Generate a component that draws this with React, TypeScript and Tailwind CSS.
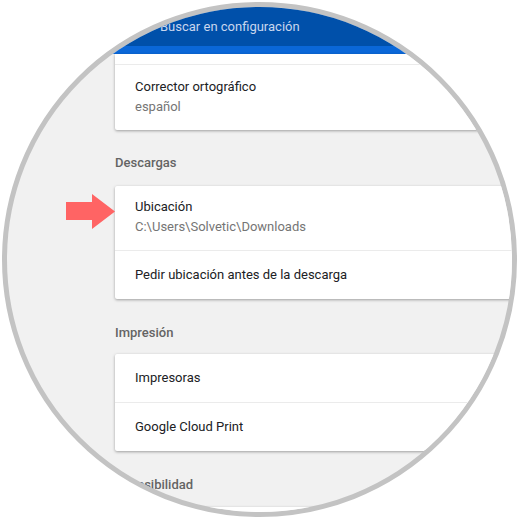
export default function App() {
  return (
    <div className="w-[520px] h-[520px] bg-white relative overflow-hidden font-['Roboto',sans-serif] text-[13px]">
      <div className="ml-[2px] mt-[2px] w-[515px] h-[515px] rounded-full border-[5px] border-[#c3c3c3] overflow-hidden bg-[#f1f1f1]">
        <div className="-ml-[7px] -mt-[7px] w-[540px]">
          {/* toolbar */}
          <div className="h-[46px] bg-[#0050aa] pl-[160px] pt-[19px]">
            <span className="block leading-[16px] text-[#c8d6ee]">Buscar en configuración</span>
          </div>
          <div className="h-[8px] bg-[#0a67d8]" />

          <div className="pl-[115px]">
            {/* spell check card (scrolled) */}
            <div className="bg-white rounded-bl-[2px] shadow-[0_1px_3px_rgba(0,0,0,0.35)] pt-[10px]">
              <div className="h-px bg-[#ebebeb]" />
              <div className="pl-[20px] pt-[12px] pb-[13px] leading-[20px]">
                <div className="text-[#202124]">Corrector ortográfico</div>
                <div className="text-[#757575]">español</div>
              </div>
            </div>

            <div className="mt-[23px] mb-[13px] leading-[20px] font-medium text-[#646464]">Descargas</div>
            <div className="bg-white rounded-l-[2px] shadow-[0_1px_3px_rgba(0,0,0,0.35)]">
              <div className="pl-[20px] pt-[11px] pb-[13px] leading-[20px]">
                <div className="text-[#202124]">Ubicación</div>
                <div className="text-[#757575]">C:\Users\Solvetic\Downloads</div>
              </div>
              <div className="h-px bg-[#ebebeb]" />
              <div className="h-[48px] pl-[20px] flex items-center text-[#202124]">Pedir ubicación antes de la descarga</div>
            </div>

            <div className="mt-[24px] mb-[11px] leading-[20px] font-medium text-[#646464]">Impresión</div>
            <div className="bg-white rounded-l-[2px] shadow-[0_1px_3px_rgba(0,0,0,0.35)]">
              <div className="h-[48px] pl-[20px] flex items-center text-[#202124]">Impresoras</div>
              <div className="h-px bg-[#ebebeb]" />
              <div className="h-[48px] pl-[20px] flex items-center text-[#202124]">Google Cloud Print</div>
            </div>

            <div className="mt-[24px] mb-[12px] leading-[20px] font-medium text-[#646464]">Accesibilidad</div>
            <div className="bg-white rounded-l-[2px] shadow-[0_1px_3px_rgba(0,0,0,0.35)] h-[60px]" />
          </div>
        </div>
      </div>

      {/* pointer arrow */}
      <svg className="absolute left-[66px] top-[194px]" width="49" height="35" viewBox="0 0 49 35">
        <polygon points="0,8 26,8 26,0 49,17.5 26,35 26,26 0,26" fill="#ff6464" />
      </svg>
    </div>
  );
}
